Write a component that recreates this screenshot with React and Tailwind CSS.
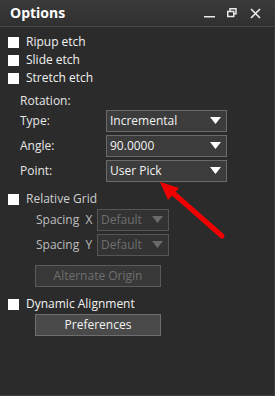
import React from 'react';

const font = { fontFamily: '"Open Sans", "Noto Sans", sans-serif' };

function Box({ className = '' }) {
  return <span className={`block w-[11px] h-[11px] bg-white shrink-0 ${className}`} />;
}

function Caret({ color = '#ffffff' }) {
  return (
    <svg width="11" height="8" viewBox="0 0 11 8" className="shrink-0">
      <polygon points="0,0 11,0 5.5,7" fill={color} />
    </svg>
  );
}

function Select({ value, disabled, width }) {
  return (
    <div
      className={`h-[22px] flex items-center justify-between pl-[3px] pr-[5px] border ${
        disabled ? 'border-[#555555] bg-[#333333] text-[#6e6e6e]' : 'border-[#6b6b6b] bg-[#3c3c3c] text-[#f2f2f2]'
      } ${width}`}
    >
      <span className="text-[12px] leading-none">{value}</span>
      <Caret color={disabled ? '#6a6a6a' : '#ffffff'} />
    </div>
  );
}

function CheckRow({ label, dim, className = '' }) {
  return (
    <div className={`h-[18px] flex items-center pl-[8px] ${className}`}>
      <Box />
      <span className={`ml-[7px] text-[12px] leading-none ${dim ? 'text-[#cfcfcf]' : 'text-[#f2f2f2]'}`}>{label}</span>
    </div>
  );
}

function FieldRow({ label, value, className = '' }) {
  return (
    <div className={`h-[22px] flex items-center pl-[20px] ${className}`}>
      <span className="w-[86px] text-[12px] leading-none text-[#e6e6e6]">{label}</span>
      <Select value={value} width="w-[121px]" />
    </div>
  );
}

function SpacingRow({ axis, className = '' }) {
  return (
    <div className={`h-[22px] flex items-center pl-[36px] ${className}`}>
      <span className="w-[61px] text-[12px] leading-none text-[#bdbdbd]">
        Spacing&nbsp;&nbsp;{axis}
      </span>
      <Select value="Default" disabled width="w-[72px]" />
    </div>
  );
}

export default function App() {
  return (
    <div style={font} className="relative w-[275px] h-[396px] bg-[#2b2b2b] border-r border-b border-[#3d3d3d] overflow-hidden select-none">
      <div className="h-[27px] flex items-center justify-between pl-[10px] pr-[13px] bg-gradient-to-b from-[#3a3a3a] to-[#303030] border-b border-[#474747]">
        <span className="text-[14px] font-bold text-white leading-none">Options</span>
        <div className="flex items-center">
          <svg width="12" height="12" viewBox="0 0 12 12">
            <rect x="0" y="9" width="11" height="1.5" fill="#e8e8e8" />
          </svg>
          <svg width="10" height="10" viewBox="0 0 10 10" className="ml-[11px]">
            <rect x="3" y="0.75" width="6" height="5" fill="none" stroke="#e8e8e8" strokeWidth="1.5" />
            <rect x="0.75" y="3.5" width="6" height="5" fill="#303030" stroke="#e8e8e8" strokeWidth="1.5" />
          </svg>
          <svg width="11" height="11" viewBox="0 0 11 11" className="ml-[13px]">
            <path d="M1 1 L10 10 M10 1 L1 10" stroke="#ececec" strokeWidth="1.6" />
          </svg>
        </div>
      </div>

      <div className="pt-[6px] flex flex-col">
        <CheckRow label="Ripup etch" />
        <CheckRow label="Slide etch" />
        <CheckRow label="Stretch etch" />
        <div className="h-[18px] mt-[5px] flex items-center pl-[20px]">
          <span className="text-[12px] leading-none text-[#e6e6e6]">Rotation:</span>
        </div>
        <FieldRow label="Type:" value="Incremental" />
        <FieldRow label="Angle:" value="90.0000" className="mt-[3px]" />
        <FieldRow label="Point:" value="User Pick" className="mt-[3px]" />

        <CheckRow label="Relative Grid" dim className="mt-[8px]" />
        <SpacingRow axis="X" className="mt-[1px]" />
        <SpacingRow axis="Y" className="mt-[3px]" />
        <div className="pl-[35px] mt-[9px]">
          <div className="w-[126px] h-[22px] flex items-center justify-center border border-[#5a5a5a] bg-[#383838] text-[12px] text-[#6f6f6f]">
            Alternate Origin
          </div>
        </div>

        <CheckRow label="Dynamic Alignment" className="mt-[8px]" />
        <div className="pl-[35px] mt-[1px]">
          <div className="w-[126px] h-[22px] flex items-center justify-center border border-[#6e6e6e] bg-[#4a4a4a] text-[12px] text-[#f2f2f2]">
            Preferences
          </div>
        </div>
      </div>

      <svg className="absolute left-0 top-0 pointer-events-none" width="275" height="396" viewBox="0 0 275 396">
        <line x1="222" y1="236" x2="172" y2="192" stroke="#f00000" strokeWidth="5" strokeLinecap="round" />
        <polygon points="160,182 179,188 168,200" fill="#f00000" />
      </svg>
    </div>
  );
}
